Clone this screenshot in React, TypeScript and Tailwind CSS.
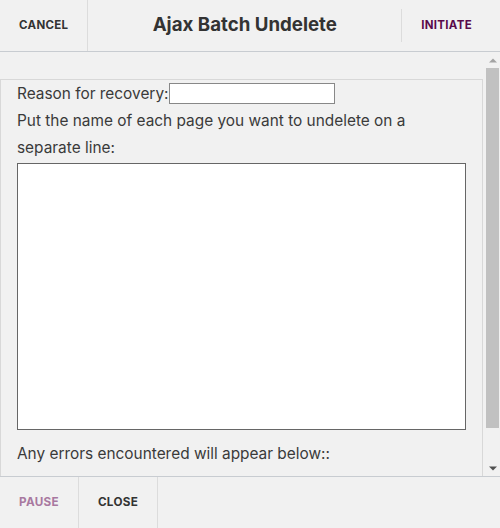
import { type FC } from 'react'

const ScrollBar: FC = () => (
  <div className="flex w-[15px] shrink-0 flex-col bg-[#f1f1f1]" aria-hidden="true">
    <div className="flex h-[16px] items-center justify-center">
      <svg width="8" height="5" viewBox="0 0 8 5">
        <path d="M0 4.5 L4 0.5 L8 4.5 Z" fill="#a3a3a3" />
      </svg>
    </div>
    <div className="flex-1 px-[1px]">
      <div className="h-[360px] bg-[#c1c1c1]" />
    </div>
    <div className="flex h-[16px] items-center justify-center">
      <svg width="8" height="5" viewBox="0 0 8 5">
        <path d="M0 0.5 L8 0.5 L4 4.5 Z" fill="#505050" />
      </svg>
    </div>
  </div>
)

const App: FC = () => {
  return (
    <div className="flex h-[528px] w-[500px] flex-col overflow-hidden bg-[#f1f1f1] font-['Inter',sans-serif] text-[#333]">
      {/* Header */}
      <div className="flex h-[52px] shrink-0 items-stretch border-b border-[#c8ccd1]">
        <button className="border-r border-[#dcdcdc] px-[19px] text-[11.5px] font-bold tracking-[0.3px] text-[#333]">
          CANCEL
        </button>
        <div className="flex flex-1 items-center justify-center text-[18.7px] font-bold text-[#333]">
          Ajax Batch Undelete
        </div>
        <button className="my-[9px] mr-[9px] border-l border-[#dcdcdc] px-[19px] text-[11.5px] font-bold tracking-[0.3px] text-[#5a0a4a]">
          INITIATE
        </button>
      </div>

      {/* Body */}
      <div className="flex min-h-0 flex-1">
        <div className="min-w-0 flex-1 overflow-hidden">
          <div className="pt-[27px]">
            <div className="mr-[2px] border border-b-0 border-[#d8d8d8] px-4 pb-[54px] text-[15.4px] leading-[27px] text-[#3a3a3a]">
              <div className="flex items-center">
                <span>Reason for recovery:</span>
                <input className="h-[21px] w-[166px] border border-[#888] bg-white" />
              </div>
              <p>Put the name of each page you want to undelete on a separate line:</p>
              <textarea className="mt-[2px] block h-[267px] w-[449px] resize-none border border-[#666] bg-white" />
              <p className="mt-[10px]">Any errors encountered will appear below::</p>
            </div>
          </div>
        </div>
        <ScrollBar />
      </div>

      {/* Footer */}
      <div className="flex h-[52px] shrink-0 items-stretch border-t border-[#c8ccd1]">
        <button className="border-r border-[#dcdcdc] px-[19px] text-[11.7px] font-bold tracking-[0.3px] text-[#a878a0]">
          PAUSE
        </button>
        <button className="border-r border-[#dcdcdc] px-[19px] text-[11.7px] font-bold tracking-[0.3px] text-[#333]">
          CLOSE
        </button>
      </div>
    </div>
  )
}

export default App
